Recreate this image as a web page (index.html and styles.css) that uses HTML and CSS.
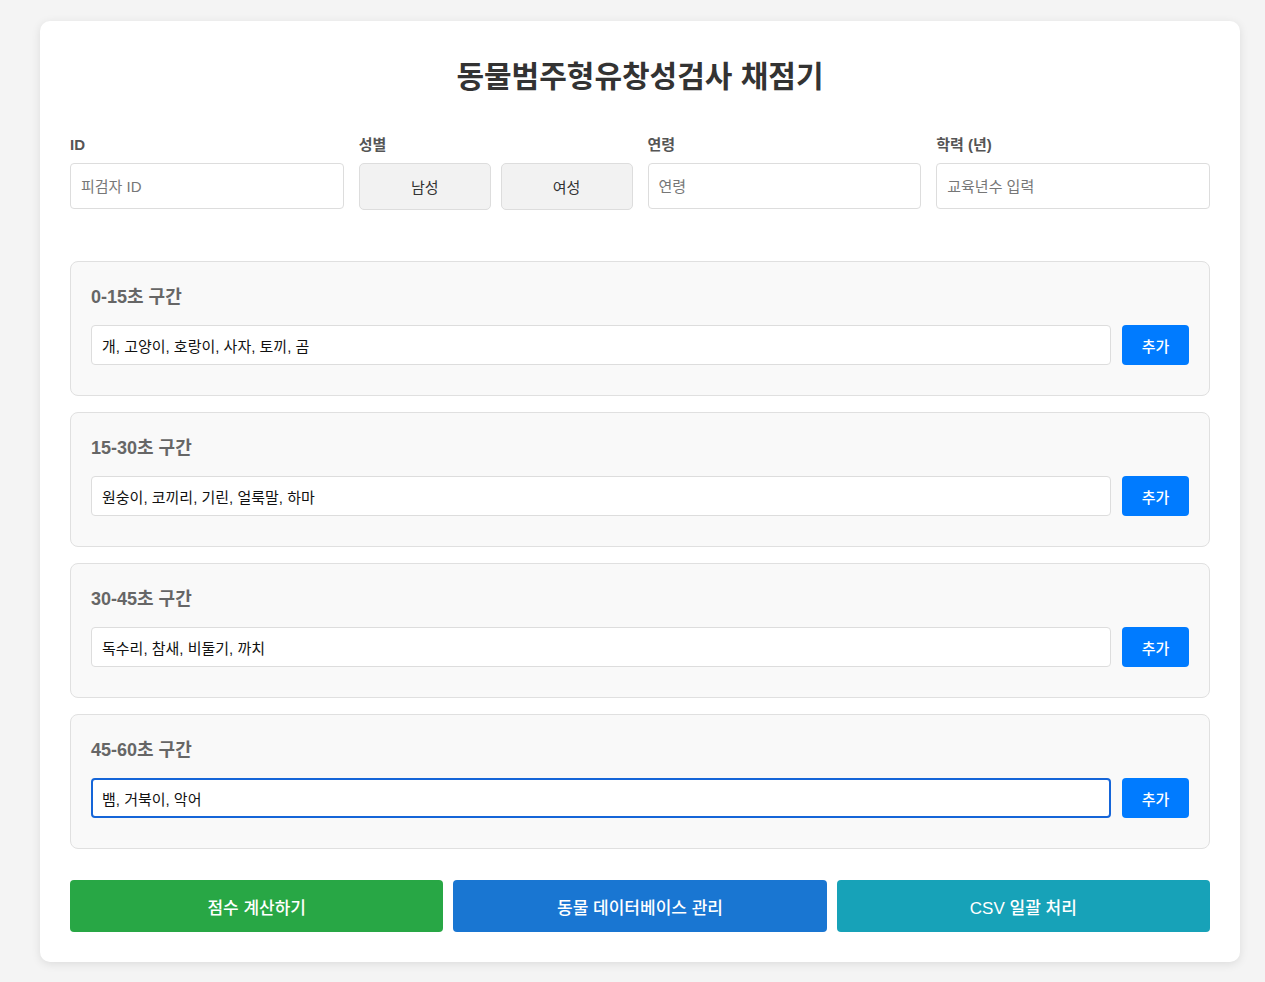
FILE: index.html
```html
<!DOCTYPE html>
<html lang="ko">
<head>
<meta charset="utf-8">
<title>동물범주형유창성검사 채점기</title>
<link rel="stylesheet" href="styles.css">
</head>
<body>
<div class="container">
  <h1 class="title">동물범주형유창성검사 채점기</h1>
  <div class="info-row">
    <div class="field">
      <label class="field-label">ID</label>
      <input class="text-input" type="text" placeholder="피검자 ID">
    </div>
    <div class="field">
      <label class="field-label">성별</label>
      <div class="gender-group">
        <button class="gender-btn">남성</button>
        <button class="gender-btn">여성</button>
      </div>
    </div>
    <div class="field">
      <label class="field-label">연령</label>
      <input class="text-input" type="text" placeholder="연령">
    </div>
    <div class="field">
      <label class="field-label">학력 (년)</label>
      <input class="text-input" type="text" placeholder="교육년수 입력">
    </div>
  </div>

  <div class="sections">
    <div class="section">
      <h3 class="section-title">0-15초 구간</h3>
      <div class="entry-row">
        <input class="entry-input" type="text" value="개, 고양이, 호랑이, 사자, 토끼, 곰">
        <button class="add-btn">추가</button>
      </div>
    </div>
    <div class="section">
      <h3 class="section-title">15-30초 구간</h3>
      <div class="entry-row">
        <input class="entry-input" type="text" value="원숭이, 코끼리, 기린, 얼룩말, 하마">
        <button class="add-btn">추가</button>
      </div>
    </div>
    <div class="section">
      <h3 class="section-title">30-45초 구간</h3>
      <div class="entry-row">
        <input class="entry-input" type="text" value="독수리, 참새, 비둘기, 까치">
        <button class="add-btn">추가</button>
      </div>
    </div>
    <div class="section">
      <h3 class="section-title">45-60초 구간</h3>
      <div class="entry-row">
        <input class="entry-input focused" type="text" value="뱀, 거북이, 악어">
        <button class="add-btn">추가</button>
      </div>
    </div>
  </div>

  <div class="actions">
    <button class="action-btn green">점수 계산하기</button>
    <button class="action-btn blue">동물 데이터베이스 관리</button>
    <button class="action-btn teal">CSV 일괄 처리</button>
  </div>
</div>
</body>
</html>
```
FILE: styles.css
```css
* { box-sizing: border-box; }
html, body { margin: 0; padding: 0; }
body {
  background: #f4f4f4;
  font-family: "Liberation Sans", "Noto Sans CJK KR", sans-serif;
  color: #333;
  padding: 21px 25px 20px 40px;
}
.container {
  width: 1200px;
  background: #fff;
  border-radius: 10px;
  box-shadow: 0 2px 10px rgba(0,0,0,0.1);
  padding: 30px;
}
.title {
  margin: 8px 0 41px;
  text-align: center;
  font-size: 30px;
  line-height: 36px;
  font-weight: bold;
  color: #333;
}
.info-row {
  display: grid;
  grid-template-columns: repeat(4, 1fr);
  gap: 15px;
  margin-bottom: 51px;
}
.field { display: flex; flex-direction: column; }
.field-label {
  font-size: 15px;
  line-height: 18px;
  font-weight: bold;
  color: #555;
  margin-bottom: 9px;
}
.text-input {
  height: 46px;
  border: 1px solid #ddd;
  border-radius: 4px;
  padding: 0 10px;
  font-family: inherit;
  font-size: 15px;
  color: #333;
  background: #fff;
}
.text-input::placeholder { color: #777; }
.gender-group {
  display: flex;
  gap: 10px;
}
.gender-btn {
  flex: 1;
  height: 47px;
  border: 1px solid #ddd;
  border-radius: 5px;
  background: #f2f2f2;
  font-family: inherit;
  font-size: 15px;
  color: #333;
}
.sections {
  display: flex;
  flex-direction: column;
  gap: 16px;
}
.section {
  background: #f9f9f9;
  border: 1px solid #e0e0e0;
  border-radius: 8px;
  padding: 20px 20px 30px;
}
.section-title {
  margin: 0 0 13px;
  font-size: 18px;
  line-height: 30px;
  font-weight: bold;
  color: #666;
}
.entry-row {
  display: flex;
  gap: 11px;
}
.entry-input {
  flex: 1;
  height: 40px;
  border: 1px solid #ddd;
  border-radius: 4px;
  padding: 0 10px;
  font-family: inherit;
  font-size: 15px;
  color: #111;
  background: #fff;
}
.entry-input.focused {
  border: 2px solid #1565d8;
  padding: 0 9px;
  outline: none;
}
.add-btn {
  width: 67px;
  height: 40px;
  border: none;
  border-radius: 4px;
  background: #007bff;
  color: #fff;
  font-family: inherit;
  font-size: 15px;
  font-weight: 500;
}
.actions {
  display: grid;
  grid-template-columns: repeat(3, 1fr);
  gap: 10px;
  margin-top: 31px;
}
.action-btn {
  height: 52px;
  border: none;
  border-radius: 4px;
  color: #fff;
  font-family: inherit;
  font-size: 17px;
  font-weight: 500;
}
.action-btn.green { background: #28a745; }
.action-btn.blue { background: #1976d2; }
.action-btn.teal { background: #17a2b8; }
```
